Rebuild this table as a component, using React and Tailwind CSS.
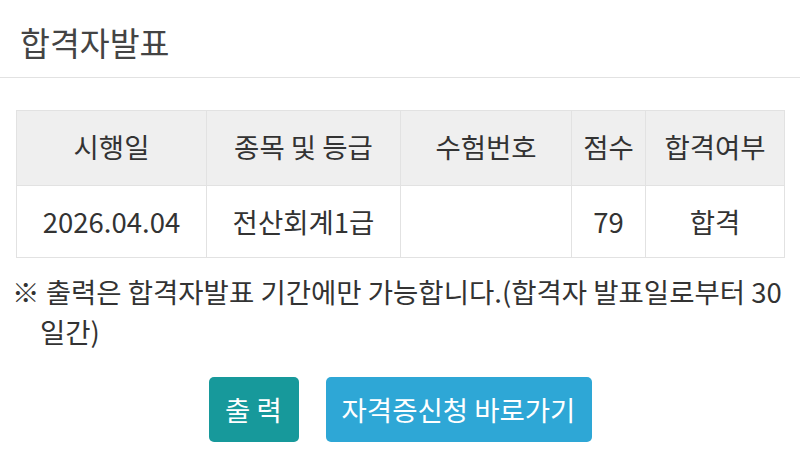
import React from 'react'

const font = { fontFamily: '"Noto Sans CJK KR", "Noto Sans", sans-serif' }

const cols = [
    { label: '시행일', value: '2026.04.04', w: 'w-[190px]' },
    { label: '종목 및 등급', value: '전산회계1급', w: 'w-[194px]' },
    { label: '수험번호', value: '', w: 'w-[171px]' },
    { label: '점수', value: '79', w: 'w-[74px]' },
    { label: '합격여부', value: '합격', w: 'w-[139px]' },
]

const App = () => {
    return (
        <div className="w-[800px] h-[468px] bg-white overflow-hidden text-[#333]" style={font}>
            <div className="h-[78px] border-b border-[#e2e2e2] flex items-center pl-[20px] pt-[8px]">
                <h1 className="text-[32.5px] font-normal text-[#444] leading-none">합격자발표</h1>
            </div>

            <div className="px-[16px] pt-[32px]">
                <table className="w-[768px] border-collapse table-fixed border border-[#e2e2e2]">
                    <thead>
                        <tr className="bg-[#efefef] h-[75px]">
                            {cols.map((c) => (
                                <th key={c.label} className={`${c.w} border border-[#e2e2e2] text-[27.5px] font-normal text-[#333] pb-[2px]`}>
                                    {c.label}
                                </th>
                            ))}
                        </tr>
                    </thead>
                    <tbody>
                        <tr className="h-[72px]">
                            {cols.map((c) => (
                                <td key={c.label} className="border border-[#e2e2e2] text-center text-[27.5px] text-[#333]">
                                    {c.value}
                                </td>
                            ))}
                        </tr>
                    </tbody>
                </table>
            </div>

            <p className="pl-[12px] pr-[6px] pt-[13px] text-[27.5px] leading-[40px] text-[#333] whitespace-nowrap">
                ※ 출력은 합격자발표 기간에만 가능합니다.(합격자 발표일로부터 30
                <br />
                <span className="pl-[28px]">일간)</span>
            </p>

            <div className="flex justify-center gap-[27px] pt-[26px]">
                <button className="w-[90px] h-[65px] rounded-[5px] bg-[#17999b] text-white text-[27.5px]">
                    출 력
                </button>
                <button className="w-[266px] h-[65px] rounded-[5px] bg-[#2ea7d6] text-white text-[27.5px]">
                    자격증신청 바로가기
                </button>
            </div>
        </div>
    )
}

export default App
